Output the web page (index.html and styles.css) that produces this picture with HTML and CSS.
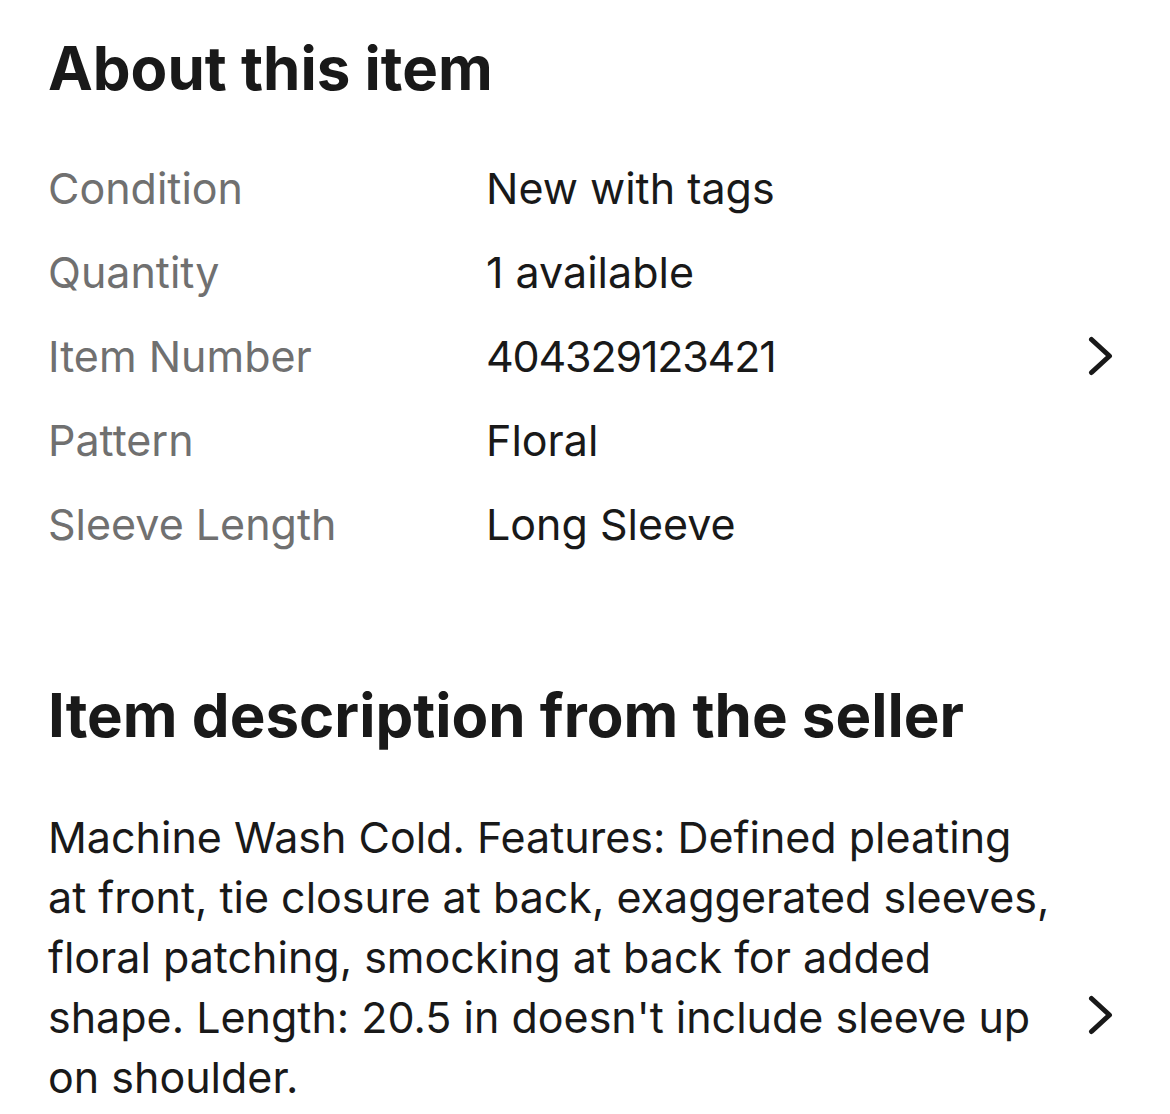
FILE: index.html
```html
<!DOCTYPE html>
<html lang="en">
<head>
<meta charset="utf-8">
<title>About this item</title>
<link rel="stylesheet" href="styles.css">
</head>
<body>
<main class="page">
  <section class="about">
    <h1 class="title">About this item</h1>
    <dl class="specs">
      <div class="row">
        <dt class="label">Condition</dt>
        <dd class="value">New with tags</dd>
      </div>
      <div class="row">
        <dt class="label">Quantity</dt>
        <dd class="value">1 available</dd>
      </div>
      <div class="row">
        <dt class="label">Item Number</dt>
        <dd class="value value-num">404329123421</dd>
        <svg class="chevron" viewBox="0 0 32 44" aria-hidden="true"><path d="M3.5 5.5 L21.5 22 L3.5 38.5"/></svg>
      </div>
      <div class="row">
        <dt class="label">Pattern</dt>
        <dd class="value">Floral</dd>
      </div>
      <div class="row">
        <dt class="label">Sleeve Length</dt>
        <dd class="value">Long Sleeve</dd>
      </div>
    </dl>
  </section>
  <section class="desc">
    <h2 class="title title-2">Item description from the seller</h2>
    <div class="desc-body">
      <p class="desc-text">Machine Wash Cold. Features: Defined pleating at front, tie closure at back, exaggerated sleeves, floral patching, smocking at back for added shape. Length: 20.5 in doesn't include sleeve up on shoulder.</p>
      <svg class="chevron chevron-desc" viewBox="0 0 32 44" aria-hidden="true"><path d="M3.5 5.5 L21.5 22 L3.5 38.5"/></svg>
    </div>
  </section>
</main>
</body>
</html>
```
FILE: styles.css
```css
html, body {
  margin: 0;
  padding: 0;
  background: #ffffff;
}
body {
  font-family: Inter, "Noto Sans", "Liberation Sans", sans-serif;
  color: #191919;
  overflow: hidden;
}
.page {
  padding: 32px 50px 0 48px;
}
.title {
  margin: 0;
  font-size: 60px;
  line-height: 72px;
  font-weight: 700;
  letter-spacing: 0;
  color: #191919;
}
.specs {
  margin: 42px 0 0 0;
  padding: 0;
}
.row {
  display: flex;
  align-items: center;
  height: 84px;
}
.label {
  width: 438px;
  flex: none;
  margin: 0;
  font-size: 43px;
  line-height: 84px;
  color: #707070;
}
.value {
  margin: 0;
  flex: 1;
  font-size: 43px;
  line-height: 84px;
  color: #191919;
}
.value-num {
  letter-spacing: -1.2px;
}
.chevron {
  width: 32px;
  height: 44px;
  flex: none;
  fill: none;
  stroke: #191919;
  stroke-width: 5;
  stroke-linecap: round;
  stroke-linejoin: round;
}
.title-2 {
  margin-top: 113px;
}
.desc-body {
  display: flex;
  align-items: flex-start;
  margin-top: 56px;
}
.desc-text {
  margin: 0;
  flex: none;
  width: 1012px;
  font-size: 43px;
  line-height: 60px;
  letter-spacing: 0;
  color: #191919;
}
.chevron-desc {
  margin-left: auto;
  margin-top: 186px;
}
```
